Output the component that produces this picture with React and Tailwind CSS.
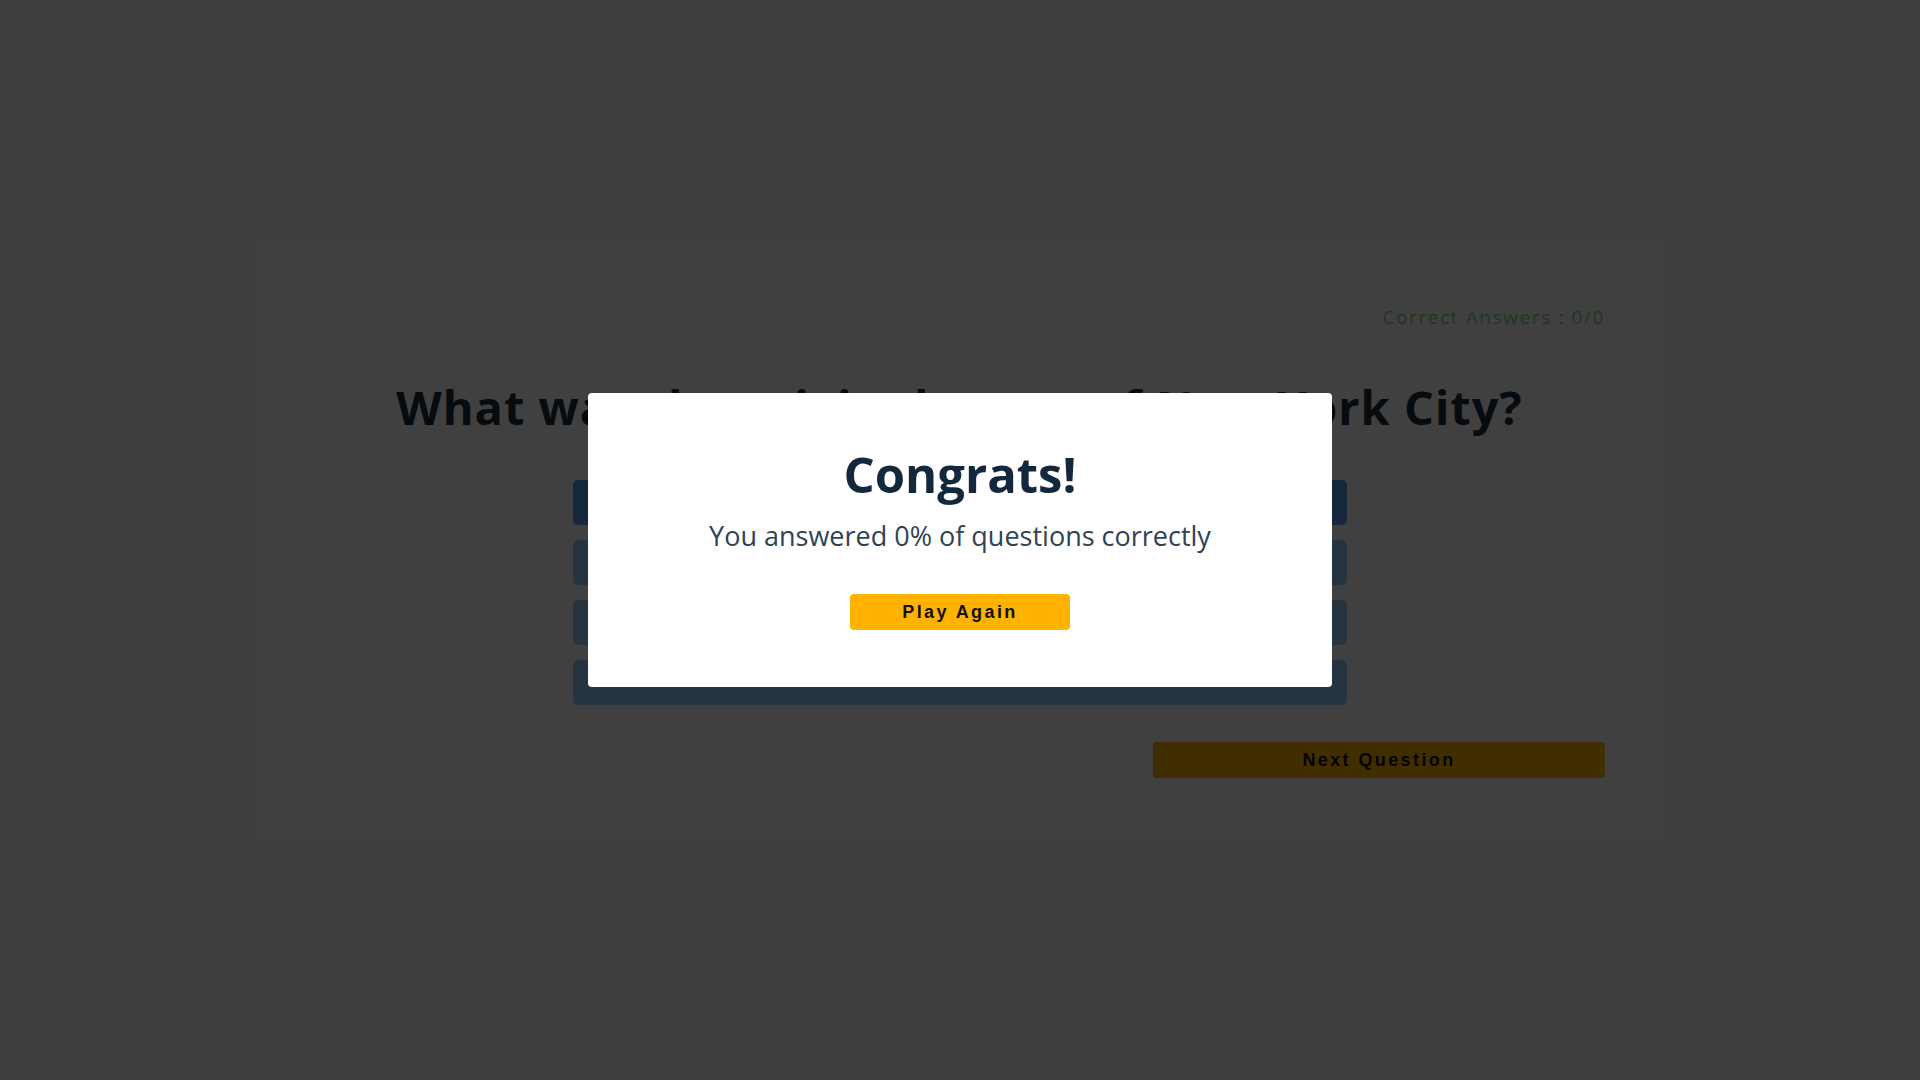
import React from "react";

const answers = ["New Amsterdam", "New Orange", "New London", "New Holland"];

export default function App() {
  return (
    <div className="relative min-h-screen w-full bg-[#f6f9fc] flex items-center justify-center" style={{ fontFamily: '"Open Sans", "Noto Sans", sans-serif' }}>
      <div className="w-[1404px] h-[590px] bg-white pl-[56px] pr-[57px] pt-[58px] flex flex-col">
        <div className="flex justify-end">
          <span className="text-[19px] leading-[28px] tracking-[1.6px] text-[#78e078]">Correct Answers : 0/0</span>
        </div>
        <h1 className="mt-[46px] text-center text-[47px] leading-[60px] font-bold tracking-[1px] text-[#1b2d40]">
          What was the original name of New York City?
        </h1>
        <div className="mt-[43px] flex flex-col items-center gap-[15px]">
          {answers.map((a, i) => (
            <button
              key={a}
              aria-label={a}
              className={`w-[774px] h-[45px] rounded-[5px] ${i === 0 ? "bg-[#56a5ed]" : "bg-[#93d0ff]"}`}
            />
          ))}
        </div>
        <div className="mt-[37px] flex justify-end">
          <button className="w-[452px] h-[36px] rounded-[4px] bg-[#ffb300] text-[#111] text-[18px] font-bold tracking-[2.4px]" style={{ fontFamily: '"Liberation Sans", Arial, sans-serif' }}>
            Next Question
          </button>
        </div>
      </div>

      <div className="fixed inset-0 bg-black/75 flex items-center justify-center">
        <div className="w-[744px] h-[294px] bg-white rounded-[4px] flex flex-col items-center pt-[52px]">
          <h2 className="text-[49px] leading-[58px] font-bold text-[#13283d]">Congrats!</h2>
          <p className="mt-[12px] text-[27px] leading-[42px] text-[#2f4356]">You answered 0% of questions correctly</p>
          <button className="mt-[37px] w-[220px] h-[36px] rounded-[4px] bg-[#ffb300] text-[#111] text-[18px] font-bold tracking-[2.4px]" style={{ fontFamily: '"Liberation Sans", Arial, sans-serif' }}>
            Play Again
          </button>
        </div>
      </div>
    </div>
  );
}
